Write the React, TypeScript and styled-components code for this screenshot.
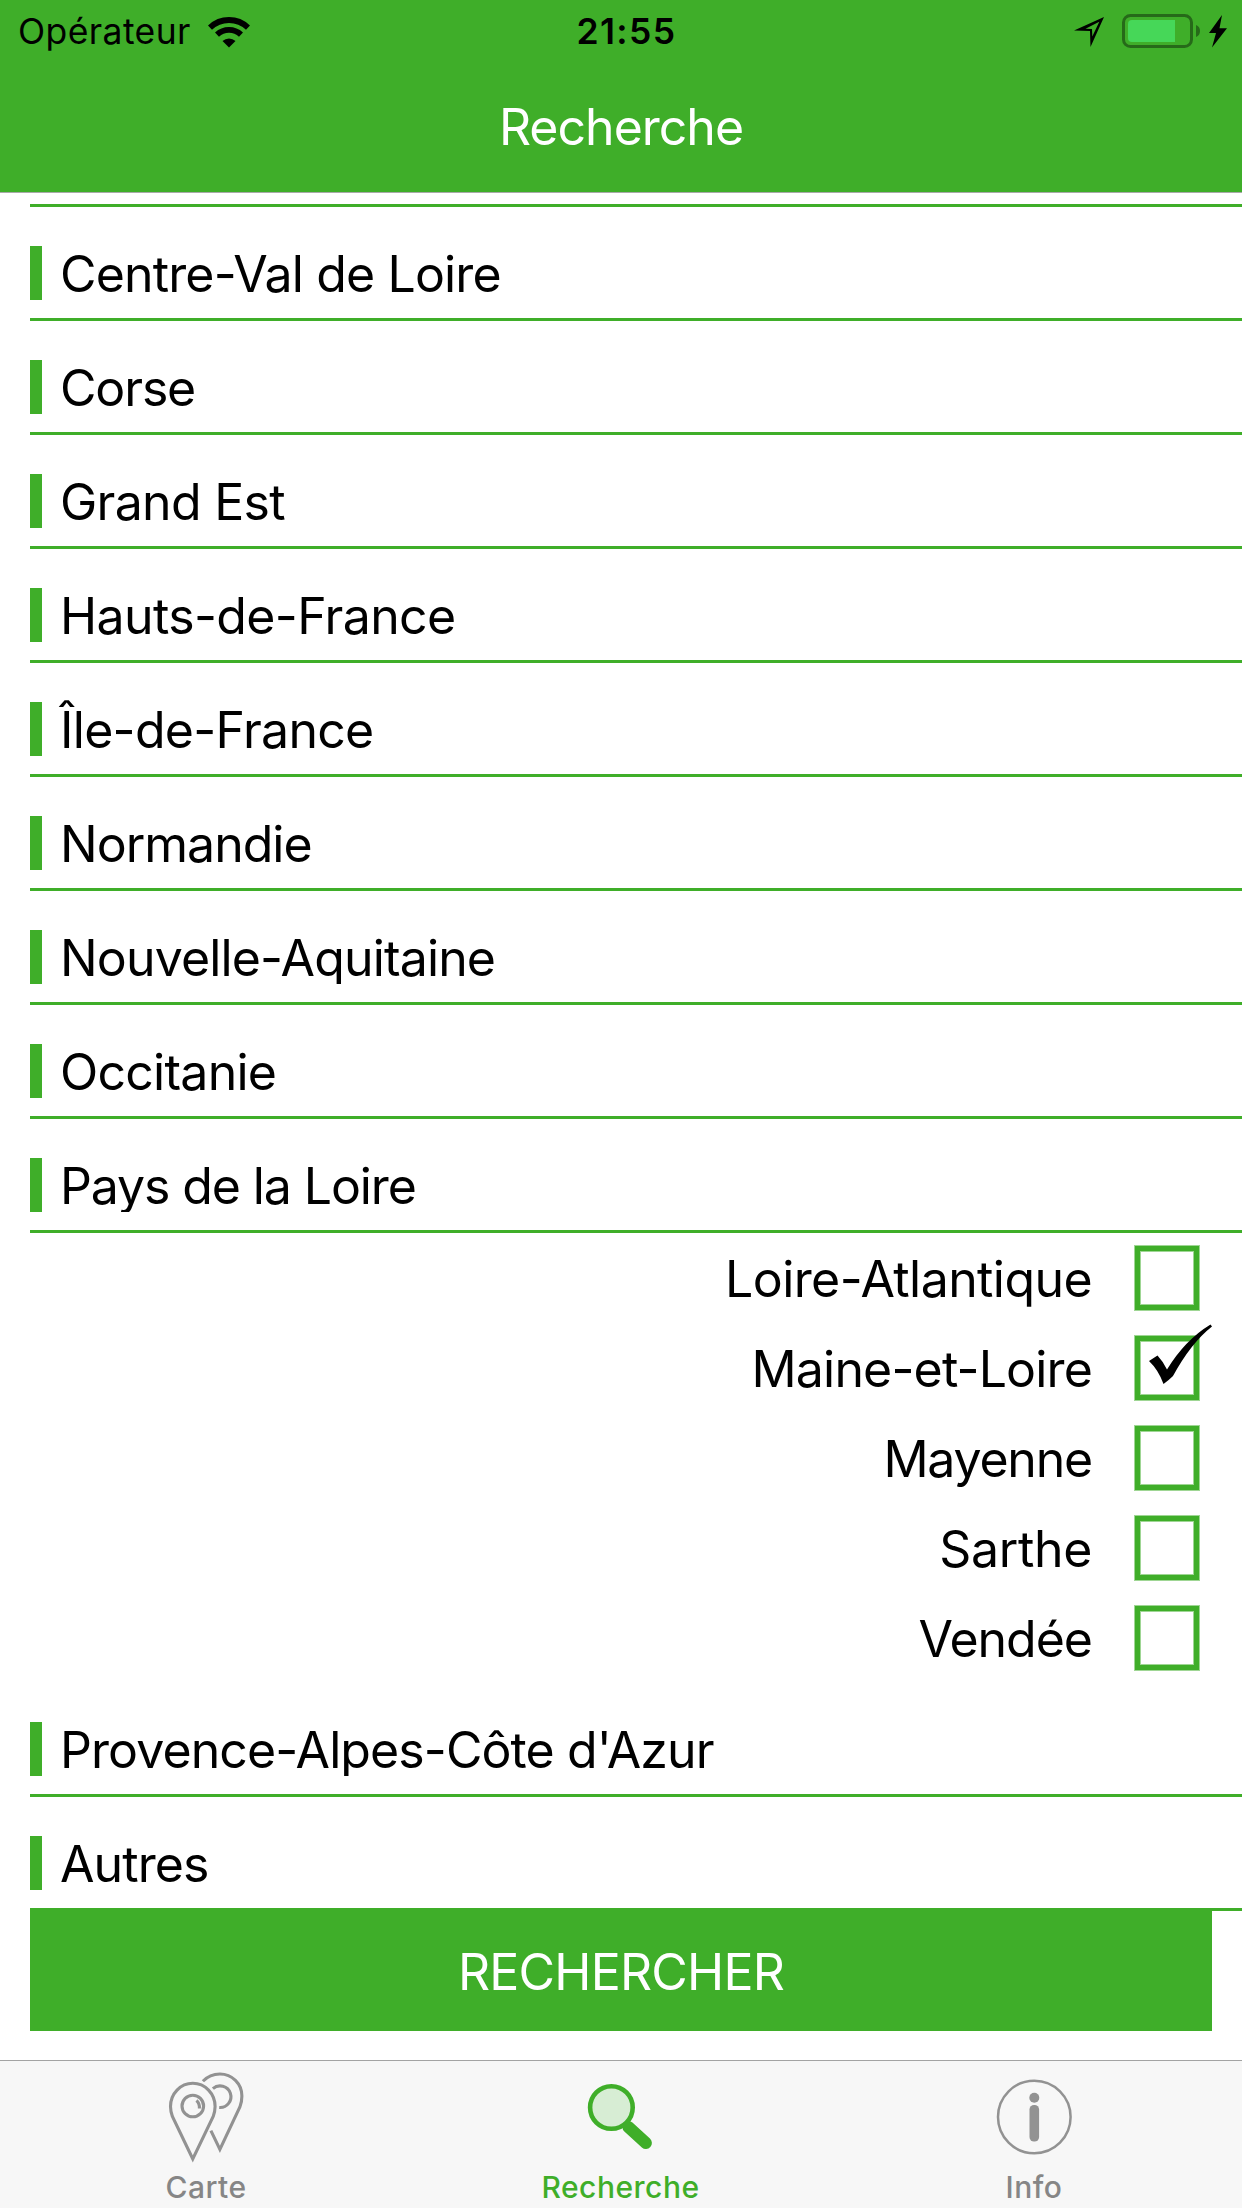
import React from "react";
import styled, { createGlobalStyle } from "styled-components";

const GREEN = "#3fae29";
const GREEN_SOFT = "#9fd694";
const GREY = "#929292";

const GlobalStyle = createGlobalStyle`
  body {
    margin: 0;
    background: #fff;
    font-family: Inter, "Liberation Sans", sans-serif;
    color: #000;
  }
`;

const Screen = styled.div`
  width: 1242px;
  height: 2208px;
  display: flex;
  flex-direction: column;
  overflow: hidden;
  background: #fff;
`;

const Header = styled.header`
  height: 192px;
  flex: none;
  background: ${GREEN};
  border-bottom: 1px solid #a9a9a9;
`;

const StatusBar = styled.div`
  height: 60px;
  display: grid;
  grid-template-columns: 1fr auto 1fr;
  align-items: center;
  padding: 0 15px 0 18px;
`;

const Carrier = styled.div`
  display: flex;
  align-items: center;
  gap: 17px;
  font-size: 35.5px;
  line-height: 60px;
  letter-spacing: 0.4px;
  padding-top: 2px;
`;

const Clock = styled.div`
  font-size: 35.5px;
  font-weight: 600;
  line-height: 60px;
  padding: 2px 0 0 8px;
  letter-spacing: 1.4px;
`;

const Indicators = styled.div`
  display: flex;
  justify-content: flex-end;
  svg {
    display: block;
  }
`;

const Title = styled.h1`
  margin: 0;
  padding-top: 3px;
  height: 128px;
  line-height: 128px;
  text-align: center;
  font-size: 50px;
  font-weight: 400;
  letter-spacing: -1px;
  color: #fff;
  box-sizing: border-box;
`;

const Content = styled.main`
  flex: 1;
  padding-left: 30px;
`;

const TopRule = styled.div`
  height: 3px;
  margin-top: 11px;
  background: ${GREEN};
`;

const Region = styled.div`
  height: 114px;
  box-sizing: border-box;
  padding: 39px 0 18px;
  border-bottom: 3px solid ${GREEN};
`;

const RegionLabel = styled.div<{ $spacing?: number }>`
  height: 54px;
  box-sizing: border-box;
  border-left: 12px solid ${GREEN};
  padding-left: 18px;
  font-size: 50px;
  line-height: 57px;
  letter-spacing: ${(p) => p.$spacing ?? 0}px;
  white-space: nowrap;
  clip-path: inset(-10px 0 0 0);
`;

const Departments = styled.div`
  display: flex;
  flex-direction: column;
`;

const Department = styled.label`
  height: 90px;
  display: flex;
  justify-content: flex-end;
  align-items: center;
  gap: 42px;
  padding-right: 42px;
`;

const DepartmentName = styled.span<{ $spacing?: number }>`
  padding-top: 2px;
  font-size: 50px;
  line-height: 60px;
  letter-spacing: ${(p) => p.$spacing ?? 0}px;
`;

const CheckBox = styled.span`
  position: relative;
  width: 66px;
  height: 66px;
  box-shadow: inset 0 0 0 1px ${GREEN_SOFT}, inset 0 0 0 6px ${GREEN},
    inset 0 0 0 7px ${GREEN_SOFT};
`;

const Tick = styled.svg`
  position: absolute;
  left: 14px;
  top: -14px;
`;

const SearchButton = styled.button`
  display: block;
  width: 1182px;
  height: 120px;
  border: 0;
  padding: 2px 0 0;
  background: ${GREEN};
  color: #fff;
  font: 400 50px/116px Inter, "Liberation Sans", sans-serif;
  letter-spacing: -0.8px;
`;

const TabBar = styled.nav`
  height: 147px;
  flex: none;
  display: flex;
  gap: 2px;
  background: #f7f7f7;
  border-top: 1px solid #a3a3a3;
`;

const Tab = styled.div`
  width: 412px;
  flex: none;
  display: flex;
  flex-direction: column;
  align-items: center;
  svg {
    display: block;
  }
`;

const TabLabel = styled.span<{ $active?: boolean }>`
  color: ${(p) => (p.$active ? GREEN : "#868686")};
  font-size: 30px;
  font-weight: 500;
  line-height: 36px;
  letter-spacing: 0.5px;
  padding-left: ${(p) => (p.$active ? 1 : 0)}px;
`;

const WifiIcon = () => (
  <svg width="42" height="31" viewBox="0 0 42 31">
    <g fill="none" stroke="#000" strokeWidth="5.8">
      <path d="M2 10.6 A27.5 27.5 0 0 1 40 10.6" />
      <path d="M9 17.7 A17.5 17.5 0 0 1 33 17.7" />
    </g>
    <path d="M14.5 24 A9.5 9.5 0 0 1 27.5 24 L21 30.5 Z" />
  </svg>
);

const StatusIcons = () => (
  <svg width="160" height="60" viewBox="1067 0 160 60">
    <path
      fillRule="evenodd"
      d="M1074 29.6 L1104 16 L1090.5 46 L1090 30 Z M1085.5 27.8 L1092 28 L1092.3 35.5 L1099.3 20.8 Z"
    />
    <rect x="1123.5" y="14.5" width="68" height="31" rx="7" fill="none" stroke="#266a19" strokeWidth="3" />
    <path fill="#46d758" d="M1132 19 H1175 V41 H1132 Q1128 41 1128 37 V23 Q1128 19 1132 19 Z" />
    <path fill="#266a19" d="M1196 24 Q1200 25.5 1200 30 Q1200 34.5 1196 36 Z" />
    <path d="M1222 14 L1209 32 H1216 L1212 46.5 L1227 27.3 H1219.5 Z" />
  </svg>
);

const MapPinsIcon = () => (
  <svg width="80" height="108" viewBox="6.6 0 80 108" fill="none" stroke={GREY} strokeWidth="3.1">
    <path d="M33.4 98 L13 55.5 Q11.1 50 11.1 45.5 A22.3 23.2 0 0 1 55.7 45.5 Q55.7 50 53.8 55.5 Z" />
    <circle cx="33.4" cy="45" r="10.8" />
    <path d="M37 39.5 Q40.3 42 40 47.5" />
    <path d="M43.5 20.3 C48 15.5 54 13 60.5 13 A22 22 0 0 1 82.5 35 Q82.5 41 80.5 46 L60.5 88.5 L51.5 69.7" />
    <path d="M53.5 27.7 A10.8 10.8 0 1 1 59.8 46.5" />
  </svg>
);

const SearchIcon = () => (
  <svg width="80" height="108" viewBox="579.6 2061 80 108">
    <path d="M628 2127 L645.5 2143" stroke={GREEN} strokeWidth="12" strokeLinecap="round" />
    <circle cx="611" cy="2107.5" r="21.3" fill="#d7edd4" stroke={GREEN} strokeWidth="4.6" />
  </svg>
);

const InfoIcon = () => (
  <svg width="80" height="108" viewBox="994 2061 80 108">
    <circle cx="1034.3" cy="2117" r="36.3" fill="none" stroke={GREY} strokeWidth="2.5" />
    <circle cx="1034.3" cy="2097.8" r="5" fill={GREY} />
    <rect x="1029.5" y="2105" width="9.6" height="36.5" rx="4.5" fill={GREY} />
  </svg>
);

const regionsBefore: [string, number][] = [
  ["Centre-Val de Loire", -0.84],
  ["Corse", -1.15],
  ["Grand Est", -0.7],
  ["Hauts-de-France", -0.63],
  ["Île-de-France", -0.7],
  ["Normandie", -1],
  ["Nouvelle-Aquitaine", -0.85],
  ["Occitanie", -0.75],
  ["Pays de la Loire", -1.1],
];

const departments: [string, boolean, number][] = [
  ["Loire-Atlantique", false, -0.58],
  ["Maine-et-Loire", true, -0.83],
  ["Mayenne", false, -1.2],
  ["Sarthe", false, -0.35],
  ["Vendée", false, -1],
];

const regionsAfter: [string, number][] = [
  ["Provence-Alpes-Côte d'Azur", -0.91],
  ["Autres", -0.9],
];

const RegionRows = ({ items }: { items: [string, number][] }) => (
  <>
    {items.map(([name, spacing]) => (
      <Region key={name}>
        <RegionLabel $spacing={spacing}>{name}</RegionLabel>
      </Region>
    ))}
  </>
);

export default function App() {
  return (
    <Screen>
      <GlobalStyle />
      <Header>
        <StatusBar>
          <Carrier>
            Opérateur
            <WifiIcon />
          </Carrier>
          <Clock>21:55</Clock>
          <Indicators>
            <StatusIcons />
          </Indicators>
        </StatusBar>
        <Title>Recherche</Title>
      </Header>
      <Content>
        <TopRule />
        <RegionRows items={regionsBefore} />
        <Departments>
          {departments.map(([name, checked, spacing]) => (
            <Department key={name}>
              <DepartmentName $spacing={spacing}>{name}</DepartmentName>
              <CheckBox>
                {checked && (
                  <Tick width="64" height="64" viewBox="1148 1321 64 64">
                    <path d="M1149 1361 L1157.5 1355.5 Q1163.5 1362 1167 1369.500 Q1185 1340 1210.5 1324.5 L1212 1326.5 Q1191 1343 1173 1376 Q1169 1380 1163.5 1384 Q1158.5 1370 1149 1361 Z" />
                  </Tick>
                )}
              </CheckBox>
            </Department>
          ))}
        </Departments>
        <RegionRows items={regionsAfter} />
        <SearchButton>RECHERCHER</SearchButton>
      </Content>
      <TabBar>
        <Tab>
          <MapPinsIcon />
          <TabLabel>Carte</TabLabel>
        </Tab>
        <Tab>
          <SearchIcon />
          <TabLabel $active>Recherche</TabLabel>
        </Tab>
        <Tab>
          <InfoIcon />
          <TabLabel>Info</TabLabel>
        </Tab>
      </TabBar>
    </Screen>
  );
}
